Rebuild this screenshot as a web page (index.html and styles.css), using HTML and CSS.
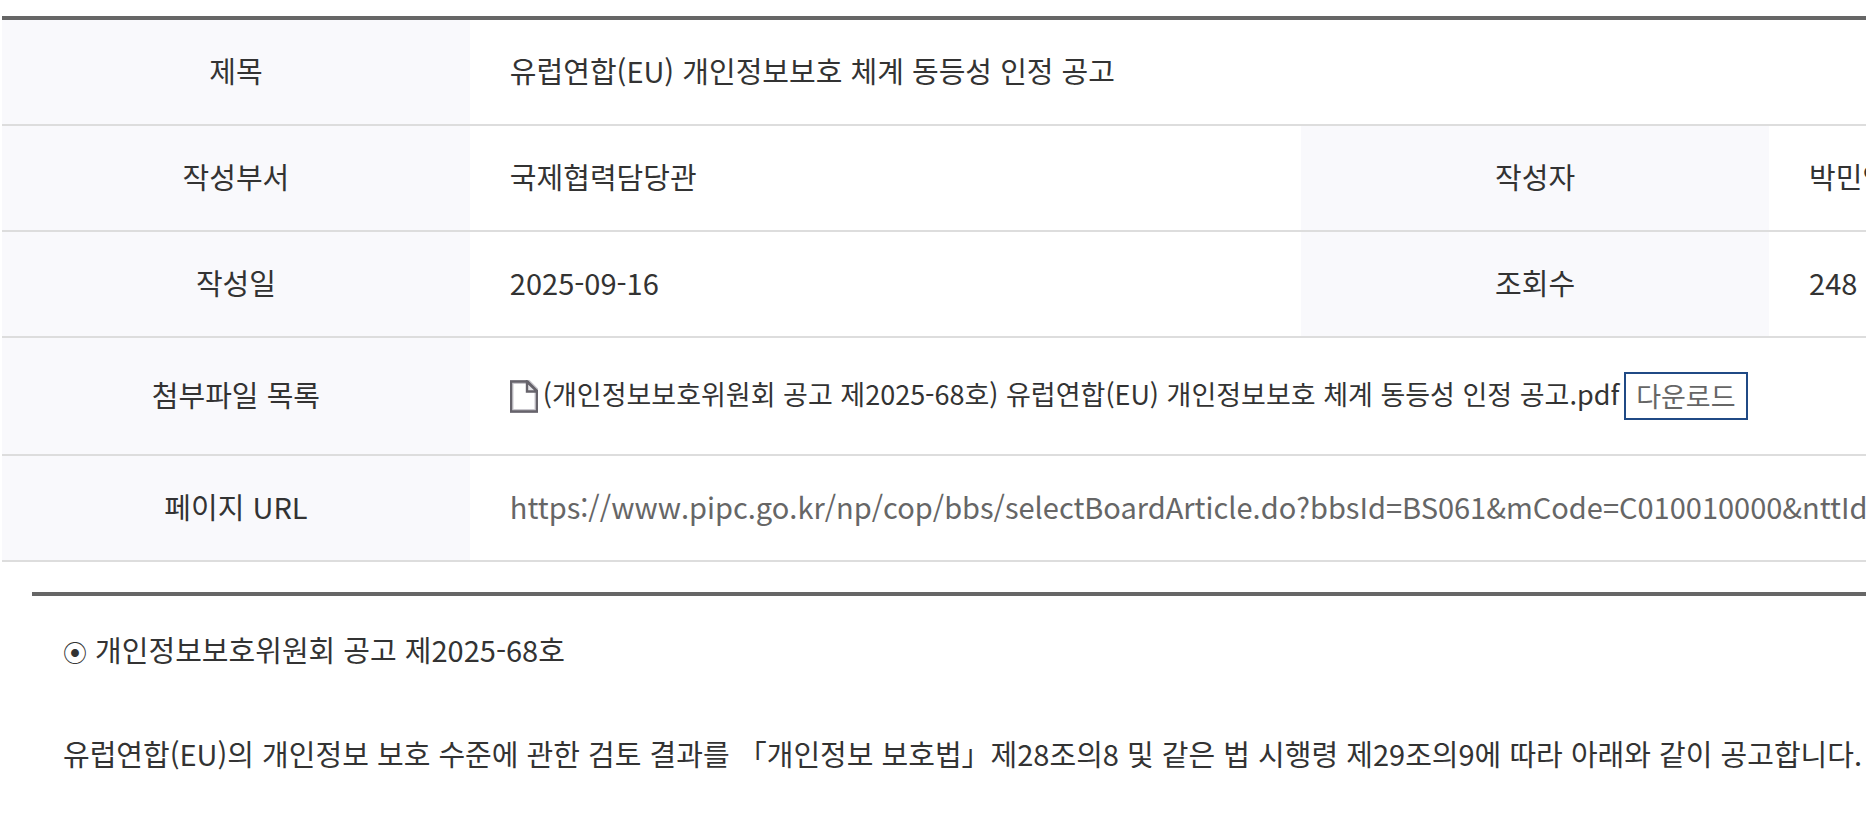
FILE: index.html
```html
<!DOCTYPE html>
<html lang="ko">
<head>
    <meta charset="UTF-8">
    <meta name="viewport" content="width=device-width, initial-scale=1.0">
    <title>유럽연합(EU) 개인정보보호 체계 동등성 인정 공고</title>
    <link rel="stylesheet" href="styles.css">
</head>
<body>

    <div class="board-view">
        <!-- Article info -->
        <table class="view-table">
            <colgroup>
                <col class="col-label">
                <col class="col-main">
                <col class="col-label">
                <col>
            </colgroup>
            <tbody>
                <tr>
                    <th scope="row">제목</th>
                    <td colspan="3">유럽연합(EU) 개인정보보호 체계 동등성 인정 공고</td>
                </tr>
                <tr>
                    <th scope="row">작성부서</th>
                    <td>국제협력담당관</td>
                    <th scope="row">작성자</th>
                    <td>박민영</td>
                </tr>
                <tr>
                    <th scope="row">작성일</th>
                    <td>2025-09-16</td>
                    <th scope="row">조회수</th>
                    <td>248</td>
                </tr>
                <tr>
                    <th scope="row">첨부파일 목록</th>
                    <td colspan="3">
                        <div class="file-item">
                            <svg class="file-icon" width="28" height="33" viewBox="0 0 28 33" aria-hidden="true">
                                <path d="M1 1.5H17.5L27 11V31.5H1Z" fill="#fff" stroke="#c9c7cd" stroke-width="5"/>
                                <path d="M1 1.5H17.5L27 11V31.5H1Z" fill="none" stroke="#66636b" stroke-width="2.4"/>
                                <path d="M17 2V11.5H27Z" fill="#e4e3e7" stroke="#66636b" stroke-width="2.4"/>
                            </svg>
                            <span class="file-name">(개인정보보호위원회 공고 제2025-68호) 유럽연합(EU) 개인정보보호 체계 동등성 인정 공고.pdf</span>
                            <a class="btn-download" href="#">다운로드</a>
                        </div>
                    </td>
                </tr>
                <tr>
                    <th scope="row">페이지 URL</th>
                    <td colspan="3"><a class="page-url" href="#">https://www.pipc.go.kr/np/cop/bbs/selectBoardArticle.do?bbsId=BS061&amp;mCode=C010010000&amp;nttId</a></td>
                </tr>
            </tbody>
        </table>

        <!-- Article body -->
        <div class="view-content">
            <p><span class="bullet">⦿</span> 개인정보보호위원회 공고 제2025-68호</p>
            <p>유럽연합(EU)의 개인정보 보호 수준에 관한 검토 결과를 「개인정보 보호법」제28조의8 및 같은 법 시행령 제29조의9에 따라 아래와 같이 공고합니다.</p>
        </div>
    </div>

</body>
</html>
```
FILE: styles.css
```css
body {
    margin: 0;
    background-color: #fff;
    color: #333;
    font-family: 'Noto Sans CJK KR', sans-serif;
    font-size: 29px;
    line-height: 52px;
}
.board-view {
    padding: 16px 0 0 2px;
    overflow: hidden;
}
.view-table {
    width: 100%;
    table-layout: fixed;
    border-spacing: 0;
    border-top: 4px solid #666;
}
.col-label {
    width: 25.1%;
}
.col-main {
    width: 44.6%;
}
.view-table th,
.view-table td {
    padding: 24px 0 28px 40px;
    border-bottom: 2px solid #ddd;
    white-space: nowrap;
    overflow: hidden;
}
.view-table th {
    padding-left: 0;
    background-color: #f9f9fc;
    font-weight: 400;
    text-align: center;
}
.file-item {
    display: flex;
    align-items: center;
    gap: 5px;
    padding: 10px 0 6px;
    font-size: 27px;
    line-height: 44px;
}
.file-icon {
    flex: none;
}
.file-name {
    padding-bottom: 4px;
}
.btn-download {
    padding: 0 10px;
    border: 2px solid #204a85;
    color: #666;
    text-decoration: none;
}
.page-url {
    color: #666;
    text-decoration: none;
}
.view-content {
    margin: 30px 0 0 30px;
    padding: 27px 0 27px 31px;
    border-top: 4px solid #666;
    white-space: nowrap;
}
.view-content p {
    margin: 0 0 52px;
}
.bullet {
    font-size: 24px;
    line-height: 1;
}
```
